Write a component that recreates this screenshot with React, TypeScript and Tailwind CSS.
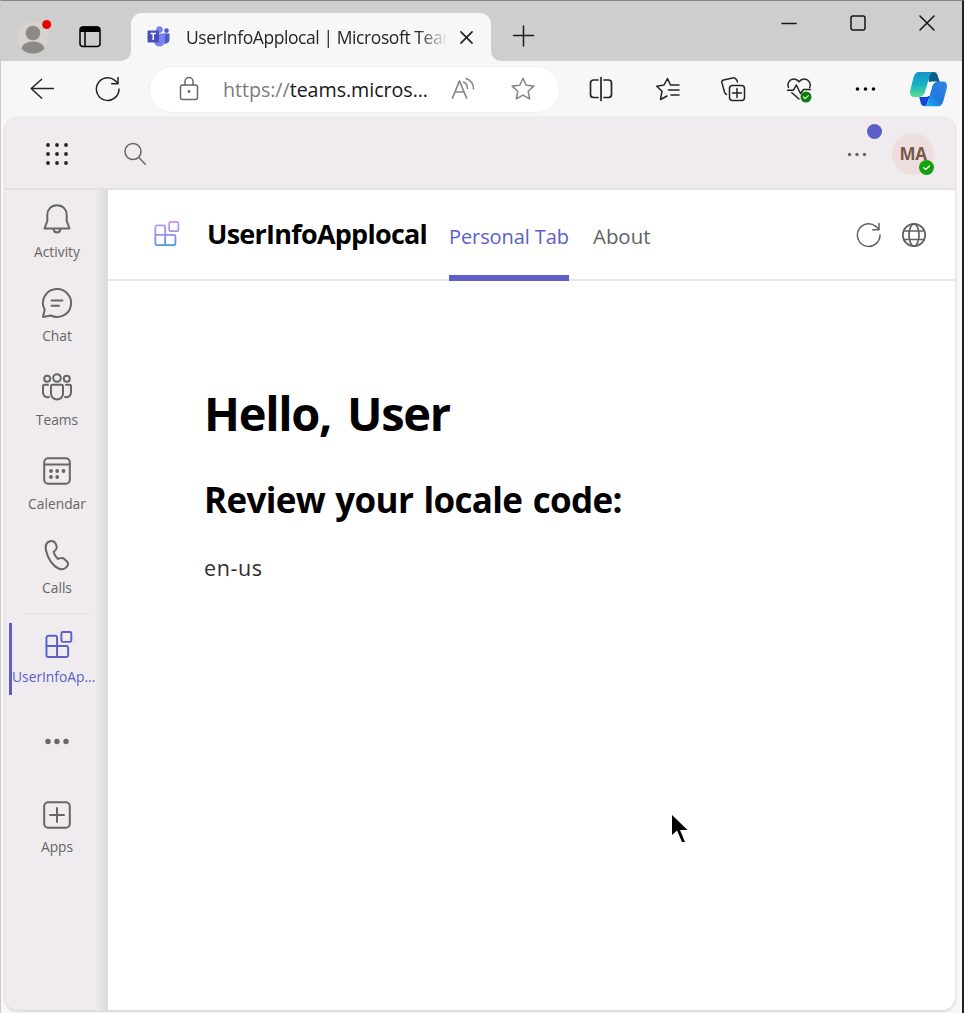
import React from "react";

type IconProps = { className?: string; children: React.ReactNode; box?: string };

function Icon({ className = "size-6", box = "0 0 24 24", children }: IconProps) {
  return (
    <svg
      viewBox={box}
      className={`shrink-0 overflow-visible ${className}`}
      fill="none"
      stroke="currentColor"
      strokeWidth="1.5"
      strokeLinecap="round"
      strokeLinejoin="round"
    >
      {children}
    </svg>
  );
}

const TeamsLogo = () => (
  <Icon className="h-[22px] w-6" box="0 0 24 22">
    <g stroke="none">
      <circle cx="19.500" cy="4.600" r="2.300" fill="#5059c9" />
      <path d="M16 7.500h5.500c.6 0 1 .4 1 1v5.500a4 4 0 0 1-6.500 2.800z" fill="#5059c9" />
      <circle cx="12.500" cy="3.600" r="3.300" fill="#7b83eb" />
      <path d="M7 7.500h10c.6 0 1 .4 1 1v6.500a5.500 5.500 0 0 1-11 0z" fill="#7b83eb" />
      <rect x="0.500" y="4.500" width="11.500" height="12" rx="1" fill="#4650ba" />
      <path d="M3.500 7.500h5.500M6.250 7.500v6.500" stroke="#fff" strokeWidth="1.500" strokeLinecap="butt" />
    </g>
  </Icon>
);

function TabStrip() {
  return (
    <div className="flex h-[60px] shrink-0 bg-[#cecece]">
      <div className="flex w-[130px] items-start bg-[#cecece] pl-4 pt-[18px]">
        <Icon className="size-8" box="0 0 32 32">
          <g stroke="none">
            <circle cx="16" cy="18" r="16" fill="#d6d3cf" />
            <circle cx="16" cy="14" r="7.300" fill="#8b8a86" />
            <path d="M4.500 29.500C6 24.500 10.500 22.500 16 22.500S26 24.500 27.500 29.500C25 33 21 34.500 16 34.500S7 33 4.500 29.500z" fill="#8b8a86" />
            <circle cx="29.700" cy="5.500" r="4.500" fill="#ee0000" />
          </g>
        </Icon>
        <Icon className="ml-[30px] mt-[7px] size-[22px] text-black" box="0 0 22 22">
          <rect x="1" y="1" width="20" height="19.500" rx="3" strokeWidth="1.500" />
          <path d="M1 6V3.500a3 3 0 0 1 3-3h14a3 3 0 0 1 3 3V6z" fill="currentColor" stroke="none" />
          <path d="M6 6v14" strokeWidth="1.500" />
        </Icon>
      </div>
      <div className="-ml-2.5 flex items-end">
        <div className="size-2.5 bg-[#f7f7f7]">
          <div className="size-2.5 rounded-br-[10px] bg-[#cecece]" />
        </div>
        <div className="flex h-[48px] w-[360px] items-center rounded-t-[11px] bg-[#f7f7f7] pl-[16px]">
          <TeamsLogo />
          <div className="ml-[15px] w-[264px] overflow-hidden whitespace-nowrap font-['Open_Sans',sans-serif] text-[17.500px] tracking-[-0.420px] text-[#262626] [mask-image:linear-gradient(to_right,black_88%,transparent_99%)]">
            UserInfoApplocal | Microsoft Teams
          </div>
          <Icon className="ml-[10px] size-[13px] text-[#222]" box="0 0 14 14">
            <path d="M1 1l12 12M13 1L1 13" strokeWidth="1.800" />
          </Icon>
        </div>
        <div className="size-2.5 bg-[#f7f7f7]">
          <div className="size-2.5 rounded-bl-[10px] bg-[#cecece]" />
        </div>
      </div>
      <Icon className="ml-[11px] mt-6 size-[22px] text-[#1c1c1c]" box="0 0 22 22">
        <path d="M11.500 1v20M1.500 10.500h20" />
      </Icon>
      <div className="ml-auto mr-[27px] mt-[14px] flex h-4 gap-[53px] text-[#151515]">
        <Icon className="size-4" box="0 0 16 16"><path d="M1 8.500h14" /></Icon>
        <Icon className="size-4" box="0 0 16 16"><rect x="1" y="1" width="14" height="14" rx="2" /></Icon>
        <Icon className="size-4" box="0 0 16 16"><path d="M1 1l14 14M15 1l-14 14" /></Icon>
      </div>
    </div>
  );
}

const STAR = "M12 1.200l3.200 7 7.600.9-5.600 5.200 1.500 7.600L12 18.200l-6.700 3.700 1.500-7.600L1.200 9.100l7.600-.9z";

function Toolbar() {
  return (
    <div className="flex h-[56px] shrink-0 items-center bg-[#f7f7f7] pl-[29px] text-[#242424]">
      <Icon><path d="M12 2L1.200 11.500 12 21.500M1.200 11.500H24" strokeLinecap="butt" /></Icon>
      <Icon className="ml-[42px] size-6">
        <path d="M23 12A11.300 11.300 0 1 1 18.800 3.300L22 6.500M22 .5v6.200h-6.300" />
      </Icon>
      <div className="ml-[30px] flex h-[45px] w-[409px] items-center rounded-full bg-white pl-[27px] shadow-[0_0_1px_1px_#f3f0f3]">
        <Icon className="size-6 text-[#686868]">
          <rect x="3.500" y="8" width="17" height="14.500" rx="2" />
          <path d="M8 8V4.500a4 4 0 0 1 8 0V8" />
          <circle cx="12" cy="14.500" r="1.400" fill="currentColor" stroke="none" />
        </Icon>
        <div className="ml-[22px] w-[207px] whitespace-nowrap pt-px font-['Open_Sans',sans-serif] text-[19.700px] tracking-[-0.060px] text-[#171717]">
          <span className="text-[#7b7b7b]">https://</span>teams.micros...
        </div>
        <Icon className="ml-[21px] size-6 text-[#858585]">
          <path d="M1.500 21L8.500 4 15.500 21M4.200 15h8.800" strokeWidth="1.700" />
          <path d="M12.500 5c2.500 1 4 3.500 4 6.500M15 1.500c4.500 1.600 7.500 5.500 7.500 10.500" />
        </Icon>
        <Icon className="ml-[36px] size-6 text-[#858585]"><path d={STAR} /></Icon>
      </div>
      <Icon className="ml-[30px] size-6">
        <path d="M9 3H4.500a3 3 0 0 0-3 3v11.500a3 3 0 0 0 3 3H9M15 3h4.500a3 3 0 0 1 3 3v11.500a3 3 0 0 1-3 3H15M12 .5v23" strokeWidth="1.700" />
      </Icon>
      <Icon className="ml-[42px] size-6">
        <path d="M15.500 8l-3-6.500-3.500 6.500-7.300 1.200 5.300 5-1.500 8.300 6.500-3.500M15.500 8H24M13.500 13H24M16 18H24" />
      </Icon>
      <Icon className="ml-[42px] size-6">
        <rect x="8.500" y="8.500" width="15" height="15" rx="3" />
        <path d="M16 11.500v9M11.500 16h9M5.500 17.500c-1-.5-1.600-1.300-2-2.500L.9 5.600c-.3-1.300.4-2.400 1.700-2.700l9-2c2-.4 4.200.9 4.800 4" />
      </Icon>
      <Icon className="ml-[42px] size-6">
        <path d="M1.500 10.500C-.2 7 2 2.500 6.500 2c2.500-.2 4 .8 5.500 2.800C13.500 2.800 15 1.800 17.500 2c4.500.5 7 5 5.200 8.500M.5 13.200h6L9.300 8l4.200 8.500 3-4h7M4.800 15.700L12 22" />
        <circle cx="19" cy="20" r="5.500" fill="#107c10" stroke="none" />
        <path d="M16.600 20l1.700 1.700 3-3" stroke="#d6f0d6" strokeWidth="1.200" />
      </Icon>
      <Icon className="ml-[42px] size-6 text-black">
        <g fill="currentColor" stroke="none"><circle cx="4.500" cy="12" r="1.800" /><circle cx="12.500" cy="12" r="1.800" /><circle cx="20.500" cy="12" r="1.800" /></g>
      </Icon>
      <CopilotLogo />
    </div>
  );
}

function CopilotLogo() {
  return (
    <Icon className="ml-[33px] h-[34px] w-[37px]" box="0 0 37 34">
      <defs>
        <linearGradient id="cpA" x1="0" y1="0" x2="0" y2="1">
          <stop offset="0" stopColor="#168fd0" /><stop offset=".5" stopColor="#14b4c4" /><stop offset="1" stopColor="#5fdc8c" />
        </linearGradient>
        <linearGradient id="cpB" x1="1" y1="0" x2="0" y2="1">
          <stop offset="0" stopColor="#2f86e6" /><stop offset=".55" stopColor="#2277dd" /><stop offset="1" stopColor="#12bdf8" />
        </linearGradient>
      </defs>
      <g stroke="none">
        <path d="M17 0h6.500c2.500 0 3.600 1.500 4.300 4l2 6H19z" fill="#0b5d85" />
        <path d="M9 24h11l-4 10h-2c-2 0-3-1.500-3.500-4z" fill="#1545d8" />
        <path d="M9 0h14.500c-2.500.6-3.700 3-4.500 6l-3.500 12.500c-1 4-2.700 6.500-6 6.500H4c-3.500 0-4.600-3-3.700-7L3.500 5.500C4.500 2 6 0 9 0z" fill="url(#cpA)" />
        <path d="M28 34.300H14c2.500-.6 3.700-3 4.500-6l3.200-12.500c1-4 2.700-6.300 6-6.300H33c3.500 0 4.600 3 3.700 7l-3.200 12c-1 3.500-2.500 5.800-5.500 5.800z" fill="url(#cpB)" />
        <path d="M18 12.500c.6-2 2-3 4-3h5.700c-3 .5-4.800 2.300-5.700 5.500l-1.500 5c-.9 3-2 5-5 5H9.500c3-.6 5-2.500 6-5.800z" fill="#fff" />
      </g>
    </Icon>
  );
}

function TeamsHeader() {
  return (
    <div className="flex h-[73px] shrink-0 items-center border-b-2 border-[#e4e1e3] pl-[40px] pt-[2px] text-[#242424]">
      <Icon>
        <g fill="currentColor" stroke="none">
          {[3, 12, 21].map((y) => [3, 12, 21].map((x) => <circle key={`${x}-${y}`} cx={x} cy={y} r="1.900" />))}
        </g>
      </Icon>
      <Icon className="ml-[54px] size-6 text-[#666]"><circle cx="10" cy="9.500" r="8" /><path d="M15.800 15.500l6.500 6.800" /></Icon>
      <div className="relative ml-auto mr-[25px] flex size-[20px] items-center text-[#666]">
        <Icon className="size-5" box="0 0 20 20">
          <g fill="currentColor" stroke="none"><circle cx="2.500" cy="10.500" r="1.700" /><circle cx="10" cy="10.500" r="1.700" /><circle cx="17.500" cy="10.500" r="1.700" /></g>
        </Icon>
        <span className="absolute left-[20px] top-[-20px] size-[15px] rounded-full bg-[#5b5fc7]" />
      </div>
      <div className="relative mr-[21px] flex size-[42px] items-center justify-center rounded-full bg-[#eedfde] font-['Open_Sans',sans-serif] text-[17px] font-bold tracking-[-0.500px] text-[#79594b]">
        MA
        <Icon className="absolute bottom-0 right-0 size-[15px]" box="0 0 15 15">
          <circle cx="7.500" cy="7.500" r="7.500" fill="#13a10e" stroke="none" />
          <path d="M4.800 7.700l1.900 1.800L10.500 6" stroke="#fff" strokeWidth="1.300" />
        </Icon>
      </div>
    </div>
  );
}

const AppTiles = ({ className, stroke = "currentColor" }: { className: string; stroke?: string }) => (
  <Icon className={className} box="0 0 28 28">
    <g stroke={stroke} strokeWidth="2">
      <path d="M3.500 5h7a2 2 0 0 1 2 2v8.500H22a2 2 0 0 1 2 2V25a2 2 0 0 1-2 2H3.500a2 2 0 0 1-2-2V7a2 2 0 0 1 2-2z" />
      <path d="M1.500 15.500h11V27" />
      <rect x="17" y="1" width="10.300" height="10.300" rx="1.500" />
    </g>
  </Icon>
);

const sideIcons: { label: string; icon: React.ReactNode }[] = [
  {
    label: "Activity",
    icon: (
      <>
        <path d="M15 1.200c-6 0-9.700 4.500-9.700 9.700v6L2.500 24.500h25l-2.800-7.600v-6C24.700 5.700 21 1.200 15 1.200z" />
        <path d="M11.500 25c.3 2.200 1.600 3.400 3.500 3.400s3.200-1.200 3.500-3.400" />
      </>
    ),
  },
  {
    label: "Chat",
    icon: (
      <path d="M15 1A14 14 0 1 1 8.800 27.500L1 29l1.700-7.300A14 14 0 0 1 15 1zM9.500 12.500h11M9.500 17.800h7.500" />
    ),
  },
  {
    label: "Teams",
    icon: (
      <>
        <circle cx="15" cy="6" r="3.800" /><circle cx="5.200" cy="6.800" r="3" /><circle cx="24.800" cy="6.800" r="3" />
        <path d="M10.500 12.800h9c.8 0 1.500.6 1.500 1.500v7.200a6 6 0 0 1-12 0v-7.200c0-.9.700-1.500 1.500-1.500zM6 12.800H2.500c-.8 0-1.500.6-1.500 1.500v6.200c0 3.500 3 5.300 6 4.500M24 12.800h3.500c.8 0 1.500.6 1.500 1.500v6.200c0 3.500-3 5.300-6 4.500" />
      </>
    ),
  },
  {
    label: "Calendar",
    icon: (
      <>
        <rect x="2.200" y="2.200" width="25.600" height="25.600" rx="4" /><path d="M2.500 8.500h25" />
        <g fill="currentColor" stroke="none">
          <circle cx="9" cy="15" r="1.900" /><circle cx="15.200" cy="15" r="1.900" /><circle cx="21.500" cy="15" r="1.900" />
          <circle cx="9" cy="21" r="1.900" /><circle cx="15.200" cy="21" r="1.900" />
        </g>
      </>
    ),
  },
  {
    label: "Calls",
    icon: (
      <path d="M8 1.300C4.500 2.300 3 5.500 4 10.500c1.700 8 7 15.500 12.500 18 4 1.800 7.500.2 9.200-3.300.7-1.500.4-2.800-.7-3.800l-3-2.600c-1-.9-2.200-1-3.500-.7l-2.500.8c-2.300-1.700-3.700-4-4.300-7l2.200-2.300c.9-1 1.100-2.100.7-3.400l-1.200-3C12.500 1.400 10.300.7 8 1.300z" />
    ),
  },
];

function Sidebar() {
  return (
    <nav className="flex w-[103px] shrink-0 flex-col bg-linear-to-r from-[#efebee] from-88% to-[#dddbdd] to-99% font-['Open_Sans',sans-serif] text-[13.800px] leading-[18px] text-[#666]">
      {sideIcons.map(({ label, icon }) => (
        <div key={label} className="flex h-[84px] flex-col items-center pl-px pt-[14px]">
          <Icon className="size-[30px]" box="0 0 30 30"><g strokeWidth="2">{icon}</g></Icon>
          <span className="mt-[9px]">{label}</span>
        </div>
      ))}
      <div className="ml-[19px] mt-[3px] h-px w-[66px] bg-[#e2dfe1]" />
      <div className="ml-[4px] mt-[9px] flex h-[72px] w-[92px] flex-col border-l-3 border-[#5b5fc7] text-[#5b5fc7]">
        <AppTiles className="ml-[33px] mt-[8px] size-[27px]" />
        <span className="mt-[10px] whitespace-nowrap">UserInfoAp...</span>
      </div>
      <Icon className="ml-[39px] mt-[34px] size-6 self-start">
        <g fill="currentColor" stroke="none"><circle cx="4" cy="12.500" r="2.700" /><circle cx="13" cy="12.500" r="2.700" /><circle cx="22" cy="12.500" r="2.700" /></g>
      </Icon>
      <div className="mt-[47px] flex flex-col items-center pl-px">
        <Icon className="size-[30px]" box="0 0 30 30">
          <g strokeWidth="2"><rect x="2.200" y="2.200" width="25.600" height="25.600" rx="4" /><path d="M15 8v14M8 15h14" /></g>
        </Icon>
        <span className="mt-[8px]">Apps</span>
      </div>
    </nav>
  );
}

function AppHeader() {
  return (
    <div className="flex h-[91px] shrink-0 items-center border-b-2 border-[#ebeaeb] pl-[46px] font-['Open_Sans',sans-serif]">
      <svg width="0" height="0" className="-mr-px w-px">
        <linearGradient id="tiles" gradientUnits="userSpaceOnUse" x1="8" y1="0" x2="10" y2="28">
          <stop offset="0" stopColor="#c49be8" /><stop offset=".5" stopColor="#a08fea" /><stop offset="1" stopColor="#4598ea" />
        </linearGradient>
      </svg>
      <AppTiles className="mb-[3px] size-[25px]" stroke="url(#tiles)" />
      <h1 className="mb-[2px] ml-[28px] w-[221px] whitespace-nowrap text-[27px] font-bold leading-none tracking-[-0.750px] text-black">
        UserInfoApplocal
      </h1>
      <div className="ml-[21px] flex h-[91px] w-[120px] items-center self-start border-b-6 border-[#5b5fc7] pt-[8px] text-[20px] font-medium tracking-[-0.100px] whitespace-nowrap text-[#5b5fc7]">
        Personal Tab
      </div>
      <div className="ml-[24px] mt-[4px] text-[20.400px] text-[#616161]">About</div>
      <div className="ml-auto mr-[29px] flex gap-[21px] text-[#616161]">
        <Icon><path d="M23 12A11.300 11.300 0 1 1 18.800 3.300L22 6.500M22 .5v6.200h-6.300" /></Icon>
        <Icon>
          <g strokeWidth="1.700"><circle cx="12" cy="12" r="11.200" /><ellipse cx="12" cy="12" rx="5" ry="11.200" /><path d="M1.800 8h20.400M1.800 16.500h20.400" /></g>
        </Icon>
      </div>
    </div>
  );
}

export default function App() {
  return (
    <div className="relative flex h-[1013px] w-[964px] flex-col border-l border-r-2 border-t border-l-[#cbcbcb] border-r-[#202020] border-t-[#858585] bg-[#f7f7f7]">
      <TabStrip />
      <Toolbar />
      <div className="ml-[4px] flex h-[893px] w-[950px] shrink-0 flex-col overflow-hidden rounded-[13px] bg-[#efebee] shadow-[0_1px_2px_1px_#dedcde]">
        <TeamsHeader />
        <div className="flex grow">
          <Sidebar />
          <main className="flex grow flex-col bg-white">
            <AppHeader />
            <section className="flex flex-col pl-[96px] pt-[98px] font-['Open_Sans',sans-serif] text-black">
              <h2 className="text-[47px] font-bold leading-[68px] tracking-[-1.300px] [word-spacing:5px]">Hello, User</h2>
              <h3 className="mt-[29px] text-[35px] font-bold leading-[48px] tracking-[-0.680px] [word-spacing:2px]">Review your locale code:</h3>
              <p className="mt-[30px] text-[21.500px] leading-[28px] tracking-[0.600px] text-[#303030]">en-us</p>
            </section>
          </main>
        </div>
      </div>
      <svg viewBox="0 0 16 27" className="absolute left-[671px] top-[814px] h-[27px] w-4">
        <path d="M0 0v20l5-4.500L10 27h3L8 15h7.500z" fill="#000" />
      </svg>
    </div>
  );
}
